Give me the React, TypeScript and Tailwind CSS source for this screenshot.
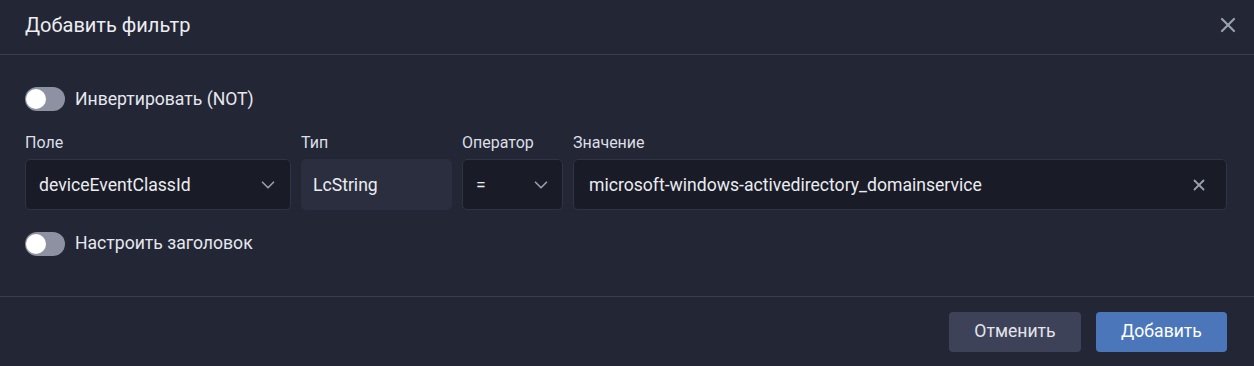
import { ChevronDown, X } from 'lucide-react'

function Toggle({ label }: { label: string }) {
  return (
    <div className="flex items-center gap-[10px]">
      <div className="relative h-6 w-10 rounded-full bg-[#8d91a1]">
        <div className="absolute left-[1px] top-[2px] h-5 w-5 rounded-full bg-white" />
      </div>
      <span className="text-[17.6px] text-[#e6e8ee]">{label}</span>
    </div>
  )
}

export default function App() {
  return (
    <div
      className="flex h-[366px] w-[1254px] flex-col bg-[#232635] text-[#e3e5eb]"
      style={{ fontFamily: 'Roboto, "Noto Sans", sans-serif' }}
    >
      <header className="flex h-[55px] items-center justify-between border-b border-[#3a3e52] pb-[5px] pl-[25px] pr-[14px]">
        <h1 className="text-[20px] text-[#eceef3]">Добавить фильтр</h1>
        <button className="text-[#9a9fae]">
          <X size={24} strokeWidth={2.2} />
        </button>
      </header>

      <main className="flex flex-1 flex-col border-b border-[#3a3e52] px-[25px] pt-[31px]">
        <Toggle label="Инвертировать (NOT)" />

        <div className="mt-[19px] flex gap-[10px]">
          <div className="flex w-[266px] flex-col">
            <label className="mb-[4px] text-[16px] text-[#dcdfe6]">Поле</label>
            <div className="flex h-[51px] items-center justify-between rounded-[5px] border border-[#2f3345] bg-[#191b26] pl-[13px] pr-[11px]">
              <span className="text-[17.6px] text-[#eaecf1]">deviceEventClassId</span>
              <ChevronDown size={22} className="text-[#9a9fae]" strokeWidth={1.8} />
            </div>
          </div>

          <div className="flex w-[151px] flex-col">
            <label className="mb-[4px] text-[16px] text-[#dcdfe6]">Тип</label>
            <div className="flex h-[51px] items-center rounded-[5px] bg-[#2b2e3e] px-[12px]">
              <span className="text-[17.6px] text-[#eaecf1]">LcString</span>
            </div>
          </div>

          <div className="flex w-[101px] flex-col">
            <label className="mb-[4px] text-[16px] text-[#dcdfe6]">Оператор</label>
            <div className="flex h-[51px] items-center justify-between rounded-[5px] border border-[#2f3345] bg-[#191b26] pl-[13px] pr-[10px]">
              <span className="text-[17.6px] text-[#eaecf1]">=</span>
              <ChevronDown size={22} className="text-[#9a9fae]" strokeWidth={1.8} />
            </div>
          </div>

          <div className="flex flex-1 flex-col pr-[2px]">
            <label className="mb-[4px] text-[16px] text-[#dcdfe6]">Значение</label>
            <div className="flex h-[51px] items-center justify-between rounded-[5px] border border-[#2f3345] bg-[#191b26] pl-[15px] pr-[18px]">
              <span className="text-[17.6px] text-[#eaecf1]">microsoft-windows-activedirectory_domainservice</span>
              <X size={18} className="text-[#9a9fae]" strokeWidth={2.4} />
            </div>
          </div>
        </div>

        <div className="mt-[20px]">
          <Toggle label="Настроить заголовок" />
        </div>
      </main>

      <footer className="flex h-[69px] items-center justify-end gap-[15px] pr-[27px]">
        <button className="h-[40px] w-[132px] rounded-[4px] bg-[#3e4259] text-[17.6px] text-[#e3e5eb]">
          Отменить
        </button>
        <button className="h-[40px] w-[131px] rounded-[4px] bg-[#4b77ba] text-[17.6px] text-white">
          Добавить
        </button>
      </footer>
    </div>
  )
}
